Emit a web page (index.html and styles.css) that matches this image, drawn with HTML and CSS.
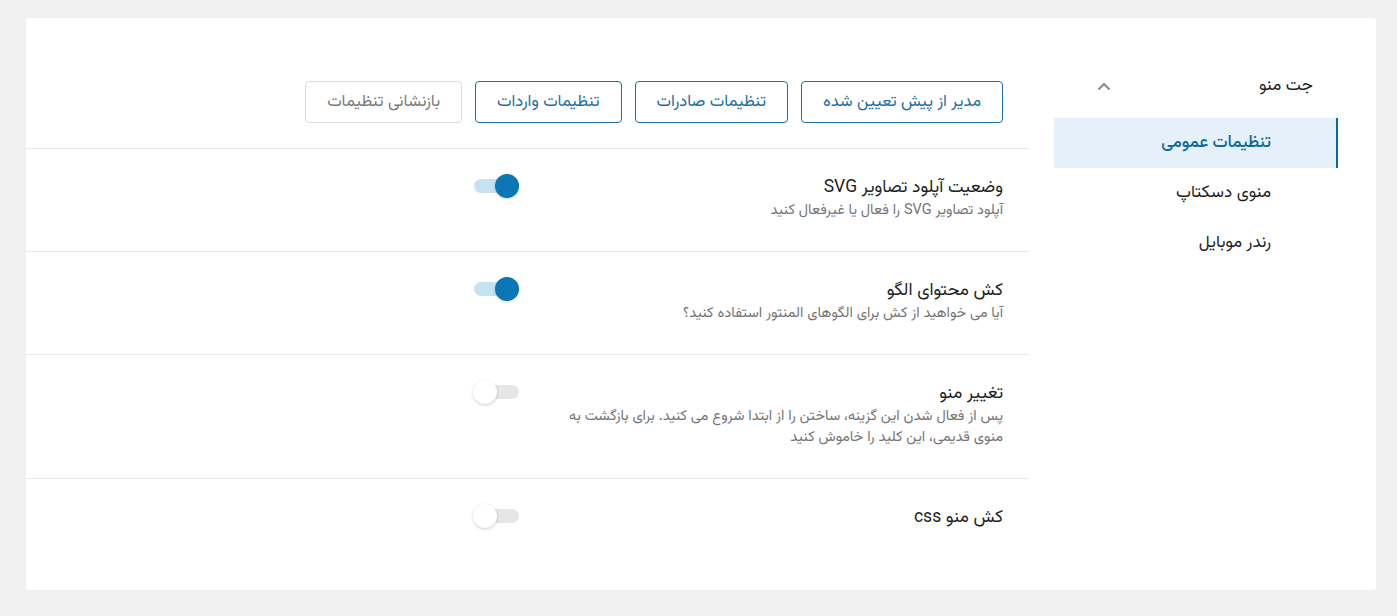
FILE: index.html
```html
<!DOCTYPE html>
<html lang="fa" dir="rtl">
<head>
<meta charset="utf-8">
<title>جت منو</title>
<link rel="stylesheet" href="styles.css">
</head>
<body>
<div class="card">
  <aside class="sidebar">
    <div class="side-head">
      <span class="side-title">جت منو</span>
      <svg class="chev" width="14" height="9" viewBox="0 0 14 9"><path d="M1.5 7.5 L7 2 L12.5 7.5" fill="none" stroke="#8a8a8a" stroke-width="2"/></svg>
    </div>
    <nav class="side-nav">
      <a class="side-item active">تنظیمات عمومی</a>
      <a class="side-item">منوی دسکتاپ</a>
      <a class="side-item">رندر موبایل</a>
    </nav>
  </aside>
  <main class="content">
    <div class="actions">
      <button class="btn">مدیر از پیش تعیین شده</button>
      <button class="btn">تنظیمات صادرات</button>
      <button class="btn">تنظیمات واردات</button>
      <button class="btn btn-muted">بازنشانی تنظیمات</button>
    </div>
    <div class="row">
      <div class="label">
        <div class="title">وضعیت آپلود تصاویر SVG</div>
        <div class="desc">آپلود تصاویر SVG را فعال یا غیرفعال کنید</div>
      </div>
      <span class="toggle on"><span class="thumb"></span></span>
    </div>
    <div class="row">
      <div class="label">
        <div class="title">کش محتوای الگو</div>
        <div class="desc">آیا می خواهید از کش برای الگوهای المنتور استفاده کنید؟</div>
      </div>
      <span class="toggle on"><span class="thumb"></span></span>
    </div>
    <div class="row">
      <div class="label">
        <div class="title">تغییر منو</div>
        <div class="desc">پس از فعال شدن این گزینه، ساختن را از ابتدا شروع می کنید. برای بازگشت به منوی قدیمی، این کلید را خاموش کنید</div>
      </div>
      <span class="toggle"><span class="thumb"></span></span>
    </div>
    <div class="row last">
      <div class="label">
        <div class="title">کش منو css</div>
      </div>
      <span class="toggle"><span class="thumb"></span></span>
    </div>
  </main>
</div>
</body>
</html>
```

FILE: styles.css
```css
* { box-sizing: border-box; }
html, body { margin: 0; }
body {
  background: #f0f0f1;
  padding: 18px 21px 26px 26px;
  font-family: "Vazirmatn", "Noto Sans Arabic", "DejaVu Sans", sans-serif;
  color: #1e1e1e;
}
.card {
  background: #fff;
  border-radius: 3px;
  height: 572px;
  display: flex;
  direction: rtl;
  padding-right: 38px;
}
.sidebar {
  width: 284px;
  flex: none;
  padding-top: 43px;
  margin-left: 25px;
}
.side-head {
  height: 50px;
  display: flex;
  align-items: center;
  justify-content: space-between;
  padding: 0 25px 0 43px;
  margin-bottom: 7px;
}
.side-title { font-size: 17px; font-weight: 400; }
.chev { display: block; }
.side-nav { display: flex; flex-direction: column; }
.side-item {
  height: 50px;
  display: flex;
  align-items: center;
  padding-right: 67px;
  font-size: 17px;
  font-weight: 400;
  color: #1e1e1e;
}
.side-item.active {
  background: #e6f0fb;
  color: #0a6aa1;
  border-right: 2px solid #0a6aa1;
  padding-right: 65px;
  font-weight: 500;
}
.content {
  flex: 1;
  padding-top: 63px;
}
.actions {
  display: flex;
  gap: 13px;
  padding: 0 26px 25px;
  border-bottom: 1px solid #e9e9e9;
}
.btn {
  height: 42px;
  padding: 0 21px;
  background: #fff;
  border: 1px solid #1b6fa6;
  border-radius: 4px;
  color: #1b6fa6;
  font-family: inherit;
  font-size: 16.5px;
  font-weight: 400;
}
.btn-muted {
  border-color: #dcdcdc;
  color: #7a7a7a;
}
.row {
  display: flex;
  align-items: flex-start;
  gap: 34px;
  padding: 27px 26px 30px;
  border-bottom: 1px solid #e9e9e9;
}
.row.last { border-bottom: 0; }
.label { width: 450px; }
.title {
  font-size: 17.5px;
  font-weight: 400;
  line-height: 24px;
  color: #1e1e1e;
}
.desc {
  font-size: 14.5px;
  line-height: 21px;
  color: #757575;
}
.toggle {
  position: relative;
  width: 46px;
  height: 24px;
  margin-top: -2px;
  flex: none;
}
.toggle::before {
  content: "";
  position: absolute;
  left: 1px;
  right: 0;
  top: 5px;
  height: 14px;
  border-radius: 7px;
  background: #e6e6e6;
}
.toggle.on::before { background: #c6e1f2; }
.thumb {
  position: absolute;
  top: 0;
  left: 0;
  width: 24px;
  height: 24px;
  border-radius: 50%;
  background: #fff;
  box-shadow: 0 1px 3px rgba(0,0,0,0.2);
}
.toggle.on .thumb {
  left: auto;
  right: 0;
  background: #0a76b5;
  box-shadow: 0 1px 3px rgba(0,0,0,0.15);
}
```
